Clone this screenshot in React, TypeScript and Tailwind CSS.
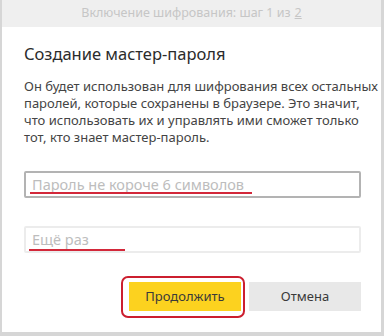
import React from 'react';

export default function App() {
  return (
    <div className="w-[384px] h-[336px] bg-[#d6d6d6] pl-[2px] pr-[3px] pb-[4px] font-['Noto_Sans','Open_Sans',sans-serif] text-[#333]">
      <div className="h-full bg-white flex flex-col">
        {/* Step header */}
        <div className="h-[27px] bg-[#efefef] flex items-center justify-center text-[12.5px] text-[#c6c6c6] whitespace-nowrap">
          Включение шифрования: шаг 1 из <span className="underline ml-1">2</span>
        </div>

        <div className="pl-[22px] pr-[20px] pt-[15px]">
          <h1 className="text-[16.5px] leading-[24px] text-[#2b2b2b] whitespace-nowrap">Создание мастер-пароля</h1>

          <p className="mt-[12px] text-[13px] leading-[17px] text-[#444] whitespace-nowrap">
            Он будет использован для шифрования всех остальных
            <br />
            паролей, которые сохранены в браузере. Это значит,
            <br />
            что использовать их и управлять ими сможет только
            <br />
            тот, кто знает мастер-пароль.
          </p>

          {/* Password */}
          <div className="relative mt-[25px] h-[27px] border-2 border-[#b3b3b3] rounded-[2px] flex items-center px-[6px]">
            <span className="text-[14.5px] text-[#bdbdbd] whitespace-nowrap">Пароль не короче 6 символов</span>
            <div className="absolute left-[4px] top-[19px] w-[222px] h-[2px] bg-[#d3283a]" />
          </div>

          {/* Repeat */}
          <div className="relative mt-[28px] h-[27px] border-2 border-[#ececec] rounded-[2px] flex items-center px-[6px]">
            <span className="text-[14.5px] text-[#bdbdbd] whitespace-nowrap">Ещё раз</span>
            <div className="absolute left-[3px] top-[21px] w-[96px] h-[2px] bg-[#d3283a]" />
          </div>

          {/* Actions */}
          <div className="mt-[29px] flex justify-end gap-[8px]">
            <div className="relative">
              <button className="w-[112px] h-[29px] bg-[#fcd21f] text-[13px] text-[#3a3a3a]">Продолжить</button>
              <div className="absolute -left-[8px] -right-[4px] -top-[6px] -bottom-[7px] border-2 border-[#cc1f2f] rounded-[7px]" />
            </div>
            <button className="w-[112px] h-[29px] bg-[#e8e8e8] text-[13px] text-[#3a3a3a]">Отмена</button>
          </div>
        </div>
      </div>
    </div>
  );
}
